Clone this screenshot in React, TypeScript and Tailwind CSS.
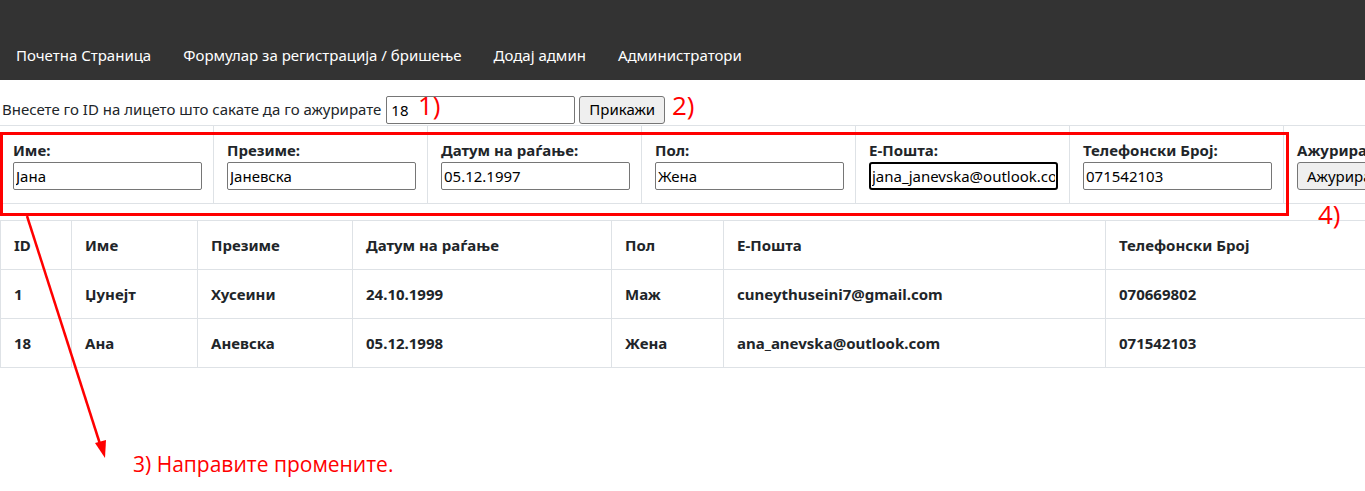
import React from 'react';

const navLinks = ['Почетна Страница', 'Формулар за регистрација / бришење', 'Додај админ', 'Администратори'];

const formFields = [
  { label: 'Име:', value: 'Јана' },
  { label: 'Презиме:', value: 'Јаневска' },
  { label: 'Датум на раѓање:', value: '05.12.1997' },
  { label: 'Пол:', value: 'Жена' },
  { label: 'Е-Пошта:', value: 'jana_janevska@outlook.com', focused: true },
  { label: 'Телефонски Број:', value: '071542103' },
];

const columns = [
  { name: 'ID', w: 'w-[71px]' },
  { name: 'Име', w: 'w-[126px]' },
  { name: 'Презиме', w: 'w-[155px]' },
  { name: 'Датум на раѓање', w: 'w-[259px]' },
  { name: 'Пол', w: 'w-[112px]' },
  { name: 'Е-Пошта', w: 'w-[382px]' },
  { name: 'Телефонски Број', w: 'w-[260px]' },
];

const rows = [
  ['1', 'Џунејт', 'Хусеини', '24.10.1999', 'Маж', 'cuneythuseini7@gmail.com', '070669802'],
  ['18', 'Ана', 'Аневска', '05.12.1998', 'Жена', 'ana_anevska@outlook.com', '071542103'],
];

const App: React.FC = () => {
  return (
    <div className="relative h-[491px] w-[1365px] overflow-hidden bg-white text-[15px] leading-6 text-[#212529] font-['Segoe_UI','Noto_Sans',sans-serif]">
      {/* Top navigation */}
      <nav className="bg-[#333333] h-[80px] pt-[32px] flex">
        {navLinks.map((l) => (
          <a key={l} className="px-4 py-[11px] text-white text-[15px]">
            {l}
          </a>
        ))}
      </nav>

      {/* ID search */}
      <div className="flex items-center mt-[15px] h-[29px] pl-[2px] leading-none">
        <span>Внесете го ID на лицето што сакате да го ажурирате</span>
        <input
          readOnly
          value="18"
          className="ml-[5px] w-[189px] h-[28px] border border-[#767676] rounded-[2px] px-[4px] text-[15px] text-black outline-none"
        />
        <button className="ml-[4px] h-[28px] px-[9px] bg-[#efefef] border border-[#767676] rounded-[3px] text-[15px] text-black">
          Прикажи
        </button>
      </div>

      {/* Edit row */}
      <div className="mt-[1px] flex border-t border-b border-[#dee2e6] w-[1500px]">
        {formFields.map((f) => (
          <div key={f.label} className="w-[214px] shrink-0 px-[13px] pt-[12px] pb-[13px] border-r border-[#dee2e6]">
            <div className="font-bold h-6 leading-6">{f.label}</div>
            <input
              readOnly
              value={f.value}
              className={
                f.focused
                  ? 'w-[189px] h-[28px] border-2 border-black rounded-[3px] px-[1px] text-[15px] text-black outline-none'
                  : 'w-[189px] h-[28px] border border-[#767676] rounded-[2px] px-[2px] text-[15px] text-black outline-none'
              }
            />
          </div>
        ))}
        <div className="w-[214px] shrink-0 px-[13px] pt-[12px] pb-[13px]">
          <div className="font-bold h-6 leading-6">Ажурирај:</div>
          <button className="h-[28px] px-[9px] bg-[#efefef] border border-[#767676] rounded-[3px] text-[15px] text-black">
            Ажурирај
          </button>
        </div>
      </div>

      {/* Data table */}
      <table className="mt-[16px] border-collapse w-[1366px] table-fixed">
        <thead>
          <tr>
            {columns.map((c) => (
              <th key={c.name} className={`${c.w} h-[49px] px-[13px] text-left font-bold border border-[#dee2e6]`}>
                {c.name}
              </th>
            ))}
          </tr>
        </thead>
        <tbody>
          {rows.map((r) => (
            <tr key={r[0]}>
              {r.map((v, i) => (
                <td key={i} className="h-[49px] px-[13px] font-bold border border-[#dee2e6]">
                  {v}
                </td>
              ))}
            </tr>
          ))}
        </tbody>
      </table>

      {/* Annotations overlay */}
      <div className="absolute left-0 top-[132px] w-[1289px] h-[84px] border-[3px] border-[#ff0000] pointer-events-none" />
      <span className="absolute left-[418px] top-[88px] text-[26px] leading-[34px] text-[#ff0000] font-['Open_Sans',sans-serif]">1)</span>
      <span className="absolute left-[672px] top-[88px] text-[26px] leading-[34px] text-[#ff0000] font-['Open_Sans',sans-serif]">2)</span>
      <span className="absolute left-[1318px] top-[197px] text-[26px] leading-[34px] text-[#ff0000] font-['Open_Sans',sans-serif]">4)</span>
      <span className="absolute left-[133px] top-[450px] text-[21px] leading-[28px] text-[#ff0000] font-['Open_Sans',sans-serif]">
        3) Направите промените.
      </span>
      <svg className="absolute left-0 top-0 pointer-events-none" width="1365" height="491">
        <line x1="27" y1="216" x2="100" y2="444" stroke="#ff0000" strokeWidth="2.5" />
        <polygon points="105,458 95,443 106,440" fill="#ff0000" />
      </svg>
    </div>
  );
};

export default App;
